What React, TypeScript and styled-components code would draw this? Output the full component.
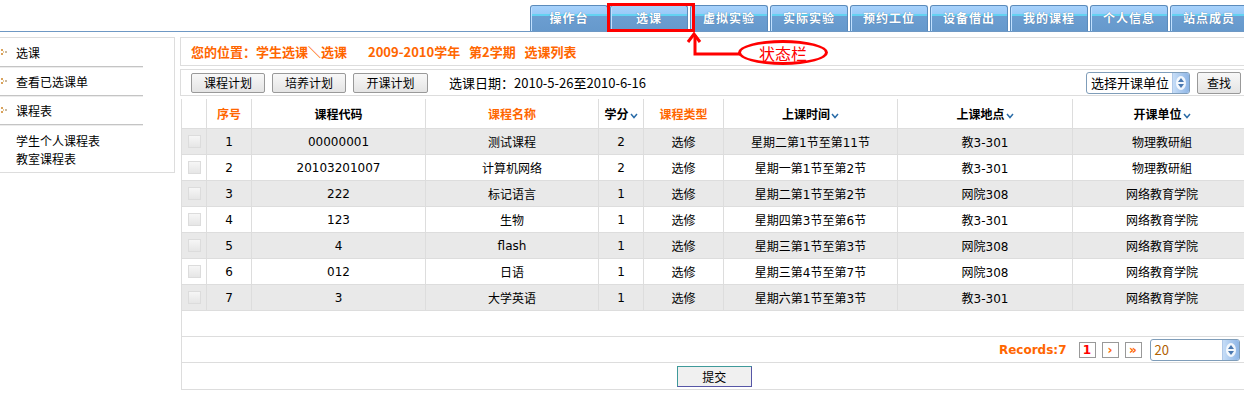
import React from 'react';
import styled, {createGlobalStyle} from 'styled-components';

const GlobalStyle = createGlobalStyle`
  body {
    margin: 0;
    background: #fff;
    color: #000;
    font-family: "DejaVu Sans", "Noto Sans CJK SC", sans-serif;
    font-size: 12px;
  }
`;

const CJK = `"Noto Sans CJK SC", "DejaVu Sans", sans-serif`;
const ORANGE = '#ff6600';
const LINE = '#dddddd';

const Page = styled.div`
  position: relative;
  width: 1244px;
  height: 397px;
  overflow: hidden;
`;

const TopBar = styled.div`
  height: 31px;
  border-bottom: 1px solid #6e98c4;
  display: flex;
  align-items: flex-end;
  gap: 2px;
  padding-left: 530px;
`;

const Tab = styled.div`
  flex: 0 0 78px;
  height: 26px;
  box-sizing: border-box;
  border: 1px solid #5b8bbb;
  border-bottom: none;
  border-radius: 3px 3px 0 0;
  background: linear-gradient(to bottom, #a8d2fb 0, #9acaf8 8px, #63d2f2 8px, #63d2f2 10px, #6c9ed1 10px, #6699cc 100%);
  box-shadow: inset 1px 0 0 #c0e0ff;
  color: #fff;
  font-family: ${CJK};
  font-weight: bold;
  font-size: 12px;
  letter-spacing: 1px;
  text-align: center;
  line-height: 24px;
  text-shadow: 0 0 1px #3a6a9a;
`;

const Content = styled.div`
  display: flex;
  gap: 5px;
  padding-top: 5px;
`;

const Sidebar = styled.div`
  flex: 0 0 175px;
  height: 136px;
  box-sizing: border-box;
  border: 1px solid ${LINE};
  border-left: none;
`;

const NavItem = styled.div`
  width: 143px;
  height: 29px;
  box-sizing: border-box;
  border-bottom: 1px solid #c4c4c4;
  box-shadow: 0 1px 0 #ececec;
  display: flex;
  align-items: center;
  gap: 9px;
  padding-left: 1px;
  font-family: ${CJK};
  font-size: 12px;
`;

const SubLinks = styled.div`
  padding: 7px 0 0 16px;
  line-height: 18px;
  font-family: ${CJK};
  font-size: 12px;
`;

const Main = styled.div`
  flex: 0 0 1070px;
  display: flex;
  flex-direction: column;
  gap: 3px;
`;

const Crumb = styled.div`
  height: 29px;
  box-sizing: border-box;
  border: 1px solid ${LINE};
  display: flex;
  align-items: center;
  gap: 21px;
  padding-left: 10px;
  color: ${ORANGE};
  font-family: ${CJK};
  font-weight: bold;
  font-size: 13px;
  white-space: pre;
`;

const Toolbar = styled.div`
  height: 27px;
  box-sizing: border-box;
  border: 1px solid ${LINE};
  display: flex;
  align-items: center;
  gap: 7px;
  padding: 0 10px;
`;

const Btn = styled.button<{$w: number}>`
  width: ${p => p.$w}px;
  height: 20px;
  padding: 0;
  border: 1px solid #999;
  border-radius: 2px;
  background: linear-gradient(to bottom, #f8f8f8, #e4e4e4);
  font-family: ${CJK};
  font-size: 12px;
  color: #000;
`;

const DateText = styled.span`
  margin-left: 14px;
  font-size: 13px;
  font-family: ${CJK};
`;

const Spacer = styled.div`
  flex: 1;
`;

const Select = styled.div<{$w: number; $color?: string}>`
  width: ${p => p.$w}px;
  height: 22px;
  box-sizing: border-box;
  border: 1px solid #7f9db9;
  border-radius: 3px;
  display: flex;
  align-items: center;
  justify-content: space-between;
  padding-left: 4px;
  background: #fff;
  color: ${p => p.$color || '#000'};
  font-family: ${CJK};
  font-size: 13px;
  overflow: hidden;
`;

const Spinner = styled.div`
  width: 16px;
  height: 20px;
  background: linear-gradient(to right, #c6ddf7, #8fb6e6);
  border-left: 1px solid #b0c8e8;
  display: flex;
  align-items: center;
  justify-content: center;
`;

const Table = styled.table`
  border-collapse: collapse;
  table-layout: fixed;
  width: 1070px;
  margin-left: 1px;
`;

const Th = styled.th<{$orange?: boolean}>`
  height: 29px;
  padding: 0;
  border: 1px solid ${LINE};
  border-top: none;
  font-family: ${CJK};
  font-size: 12px;
  font-weight: bold;
  color: ${p => (p.$orange ? ORANGE : '#000')};
  white-space: nowrap;
`;

const Tr = styled.tr<{$odd: boolean}>`
  background: ${p => (p.$odd ? '#e9e9e9' : '#fff')};
`;

const Td = styled.td`
  height: 25px;
  padding: 0;
  border: 1px solid ${LINE};
  text-align: center;
  font-size: 12px;
  white-space: nowrap;
`;

const FootCell = styled.td<{$h: number}>`
  height: ${p => p.$h}px;
  padding: 0;
  border: 1px solid ${LINE};
  border-right: none;
`;

const Check = styled.div`
  width: 11px;
  height: 11px;
  margin: 0 auto;
  border: 1px solid #dcdcdc;
  background: linear-gradient(to bottom, #f6f6f6, #e6e6e6);
`;

const Pager = styled.div`
  display: flex;
  align-items: center;
  justify-content: flex-end;
  padding-right: 12px;
  gap: 6px;
`;

const Records = styled.span`
  color: ${ORANGE};
  font-weight: bold;
  font-size: 12px;
  margin-right: 6px;
`;

const PageBox = styled.span<{$red?: boolean}>`
  width: 15px;
  height: 14px;
  border: 1px solid #999;
  display: inline-flex;
  align-items: center;
  justify-content: center;
  font-weight: bold;
  font-size: 12px;
  line-height: 1;
  color: ${p => (p.$red ? '#ff0000' : ORANGE)};
  background: #fff;
`;

const SubmitRow = styled.div`
  display: flex;
  justify-content: center;
  padding-right: 5px;
`;

const SubmitBtn = styled.button`
  width: 75px;
  height: 21px;
  padding: 0;
  border: 1px solid;
  border-color: #3f9a9a #5656a6 #5656a6 #3f9a9a;
  background: #f0f0f0;
  font-family: ${CJK};
  font-size: 12px;
  color: #000;
`;

const RedFrame = styled.div`
  position: absolute;
  left: 607px;
  top: 3px;
  width: 88px;
  height: 29px;
  box-sizing: border-box;
  border: 3px solid #ff0000;
`;

const Arrow = styled.svg`
  position: absolute;
  left: 680px;
  top: 30px;
`;

const Bubble = styled.div`
  position: absolute;
  left: 738px;
  top: 40px;
  width: 90px;
  height: 25px;
  box-sizing: border-box;
  border: 3px solid #ff0000;
  border-radius: 50%;
  display: flex;
  align-items: center;
  justify-content: center;
  color: #ff0000;
  font-family: ${CJK};
  font-size: 16px;
  line-height: 1;
`;

const tabs = ['操作台', '选课', '虚拟实验', '实际实验', '预约工位', '设备借出', '我的课程', '个人信息', '站点成员'];

const rows = [
  ['1', '00000001', '测试课程', '2', '选修', '星期二第1节至第11节', '教3-301', '物理教研組'],
  ['2', '20103201007', '计算机网络', '2', '选修', '星期一第1节至第2节', '教3-301', '物理教研組'],
  ['3', '222', '标记语言', '1', '选修', '星期二第1节至第2节', '网院308', '网络教育学院'],
  ['4', '123', '生物', '1', '选修', '星期四第3节至第6节', '教3-301', '网络教育学院'],
  ['5', '4', 'flash', '1', '选修', '星期三第1节至第3节', '网院308', '网络教育学院'],
  ['6', '012', '日语', '1', '选修', '星期三第4节至第7节', '网院308', '网络教育学院'],
  ['7', '3', '大学英语', '1', '选修', '星期六第1节至第3节', '教3-301', '网络教育学院'],
];

const colWidths = [25, 45, 174, 173, 45, 80, 174, 175, 179];

const Bullet = () => (
  <svg width="6" height="6" viewBox="0 0 6 6">
    <rect x="0" y="0" width="2" height="2" fill="#d9a25c" />
    <rect x="0" y="4" width="2" height="2" fill="#d9a25c" />
    <rect x="4" y="2" width="2" height="2" fill="#c8b8a0" />
    <rect x="2" y="2" width="1" height="2" fill="#e8c890" />
  </svg>
);

const Chevron = () => (
  <svg width="8" height="6" viewBox="0 0 8 6" style={{marginLeft: 1, verticalAlign: 'middle'}}>
    <polyline points="1,1 4,4.5 7,1" fill="none" stroke="#2a6ca8" strokeWidth="1.5" />
  </svg>
);

const SpinArrows = () => (
  <Spinner>
    <svg width="12" height="16" viewBox="0 0 12 16">
      <ellipse cx="6" cy="8" rx="5" ry="7" fill="#fff" opacity="0.85" />
      <polygon points="6,3 9,7 3,7" fill="#4a78b0" />
      <polygon points="6,13 9,9 3,9" fill="#4a78b0" />
    </svg>
  </Spinner>
);

function App() {
  return (
    <Page>
      <GlobalStyle />
      <TopBar>
        {tabs.map(t => (
          <Tab key={t}>{t}</Tab>
        ))}
      </TopBar>

      <Content>
        <Sidebar>
          <NavItem><Bullet />选课</NavItem>
          <NavItem><Bullet />查看已选课单</NavItem>
          <NavItem><Bullet />课程表</NavItem>
          <SubLinks>
            <div>学生个人课程表</div>
            <div>教室课程表</div>
          </SubLinks>
        </Sidebar>

        <Main>
          <Crumb>
            <span>您的位置：学生选课＼选课</span>
            <span>2009-2010学年   第2学期   选课列表</span>
          </Crumb>

          <Toolbar>
            <Btn $w={74}>课程计划</Btn>
            <Btn $w={74}>培养计划</Btn>
            <Btn $w={75}>开课计划</Btn>
            <DateText>选课日期：2010-5-26至2010-6-16</DateText>
            <Spacer />
            <Select $w={104}>选择开课单位<SpinArrows /></Select>
            <Btn $w={44} style={{height: 22}}>查找</Btn>
          </Toolbar>

          <Table>
            <colgroup>
              {colWidths.map((w, i) => (
                <col key={i} style={{width: w}} />
              ))}
            </colgroup>
            <thead>
              <tr>
                <Th />
                <Th $orange>序号</Th>
                <Th>课程代码</Th>
                <Th $orange>课程名称</Th>
                <Th>学分<Chevron /></Th>
                <Th $orange>课程类型</Th>
                <Th>上课时间<Chevron /></Th>
                <Th>上课地点<Chevron /></Th>
                <Th>开课单位<Chevron /></Th>
              </tr>
            </thead>
            <tbody>
              {rows.map((r, i) => (
                <Tr key={r[0]} $odd={i % 2 === 0}>
                  <Td><Check /></Td>
                  {r.map((c, j) => (
                    <Td key={j}>{c}</Td>
                  ))}
                </Tr>
              ))}
              <tr>
                <FootCell colSpan={9} $h={25} />
              </tr>
              <tr>
                <FootCell colSpan={9} $h={25}>
                  <Pager>
                    <Records>Records:7</Records>
                    <PageBox $red>1</PageBox>
                    <PageBox>›</PageBox>
                    <PageBox>»</PageBox>
                    <Select $w={90} $color="#b06000" style={{marginLeft: 2}}>20<SpinArrows /></Select>
                  </Pager>
                </FootCell>
              </tr>
              <tr>
                <FootCell colSpan={9} $h={26}>
                  <SubmitRow>
                    <SubmitBtn>提交</SubmitBtn>
                  </SubmitRow>
                </FootCell>
              </tr>
            </tbody>
          </Table>
        </Main>
      </Content>

      <RedFrame />
      <Arrow width="64" height="30" viewBox="0 0 64 30">
        <polyline points="8,12 14,4 20,12" fill="none" stroke="#ff0000" strokeWidth="3" />
        <polyline points="15,5 15,24 60,24" fill="none" stroke="#ff0000" strokeWidth="3" />
      </Arrow>
      <Bubble>状态栏</Bubble>
    </Page>
  );
}

export default App;
